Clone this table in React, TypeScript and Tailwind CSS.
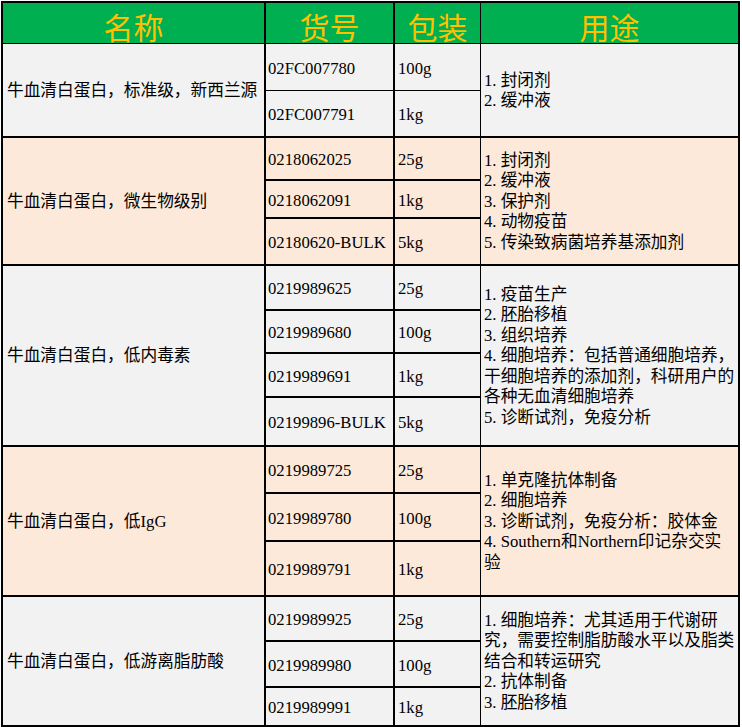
import React from "react";

type Group = {
  name: string;
  bg: string;
  h: string;
  rows: { code: string; pack: string; h: string; border: string }[];
  uses: string[];
};

const groups: Group[] = [
  {
    name: "牛血清白蛋白，标准级，新西兰源",
    bg: "bg-[#f2f2f2]",
    h: "h-[92px]",
    rows: [
      { code: "02FC007780", pack: "100g", h: "h-[46px]", border: "" },
      { code: "02FC007791", pack: "1kg", h: "h-[46px]", border: "border-t border-black" },
    ],
    uses: ["1.封闭剂", "2.缓冲液"],
  },
  {
    name: "牛血清白蛋白，微生物级别",
    bg: "bg-[#fde9d9]",
    h: "h-[128px] border-t-2 border-black",
    rows: [
      { code: "0218062025", pack: "25g", h: "h-[41px]", border: "" },
      { code: "0218062091", pack: "1kg", h: "h-[38px]", border: "border-t-2 border-black" },
      { code: "02180620-BULK", pack: "5kg", h: "h-[47px]", border: "border-t-2 border-black" },
    ],
    uses: ["1.封闭剂", "2.缓冲液", "3.保护剂", "4.动物疫苗", "5.传染致病菌培养基添加剂"],
  },
  {
    name: "牛血清白蛋白，低内毒素",
    bg: "bg-[#f2f2f2]",
    h: "h-[181px] border-t-2 border-black",
    rows: [
      { code: "0219989625", pack: "25g", h: "h-[43px]", border: "" },
      { code: "0219989680", pack: "100g", h: "h-[43px]", border: "border-t-2 border-black" },
      { code: "0219989691", pack: "1kg", h: "h-[44px]", border: "border-t-2 border-black" },
      { code: "02199896-BULK", pack: "5kg", h: "h-[49px]", border: "border-t-2 border-black" },
    ],
    uses: [
      "1.疫苗生产",
      "2.胚胎移植",
      "3.组织培养",
      "4.细胞培养：包括普通细胞培养，",
      "干细胞培养的添加剂，科研用户的",
      "各种无血清细胞培养",
      "5.诊断试剂，免疫分析",
    ],
  },
  {
    name: "牛血清白蛋白，低IgG",
    bg: "bg-[#fde9d9]",
    h: "h-[150px] border-t-2 border-black",
    rows: [
      { code: "0219989725", pack: "25g", h: "h-[45px]", border: "" },
      { code: "0219989780", pack: "100g", h: "h-[48px]", border: "border-t-2 border-black" },
      { code: "0219989791", pack: "1kg", h: "h-[55px]", border: "border-t-2 border-black" },
    ],
    uses: [
      "1.单克隆抗体制备",
      "2.细胞培养",
      "3.诊断试剂，免疫分析：胶体金",
      "4.Southern和Northern印记杂交实",
      "验",
    ],
  },
  {
    name: "牛血清白蛋白，低游离脂肪酸",
    bg: "bg-[#f2f2f2]",
    h: "h-[130px] border-t-2 border-black",
    rows: [
      { code: "0219989925", pack: "25g", h: "h-[43px]", border: "" },
      { code: "0219989980", pack: "100g", h: "h-[46px]", border: "border-t-2 border-black" },
      { code: "0219989991", pack: "1kg", h: "h-[39px]", border: "border-t-2 border-black" },
    ],
    uses: [
      "1.细胞培养：尤其适用于代谢研",
      "究，需要控制脂肪酸水平以及脂类",
      "结合和转运研究",
      "2.抗体制备",
      "3.胚胎移植",
    ],
  },
];

// "1." etc. is half-width in the original font, so give the prefix a fixed box
const UseLine = ({ text }: { text: string }) => {
  const m = text.match(/^(\d\.)(.*)$/);
  if (!m) return <div className="whitespace-nowrap">{text}</div>;
  return (
    <div className="whitespace-nowrap">
      <span className="inline-block w-[16.7px]">{m[1]}</span>
      {m[2]}
    </div>
  );
};

export default function App() {
  return (
    <div className="min-h-screen bg-white font-['Liberation_Serif','Noto_Sans_CJK_SC',serif] text-[16.7px] leading-[20.5px] text-black">
      <div className="ml-px mt-px w-[739px] border-2 border-black">
        {/* Header */}
        <div className="flex h-[41px] border-b border-black bg-[#00b050] font-['Noto_Sans_CJK_SC',sans-serif] text-[30px] leading-[30px] font-normal text-[#ffc000]">
          <div className="flex w-[263px] justify-center border-r-2 border-black pt-[8px]">名称</div>
          <div className="flex w-[129px] justify-center border-r-2 border-black pt-[8px]">货号</div>
          <div className="flex w-[86px] justify-center border-r border-black pt-[8px]">包装</div>
          <div className="flex flex-1 justify-center pt-[8px]">用途</div>
        </div>

        {groups.map((g) => (
          <div key={g.name} className={`flex ${g.h} ${g.bg}`}>
            <div className="flex w-[263px] items-center border-r-2 border-black pl-[4px] pt-[2px] whitespace-nowrap">
              {g.name}
            </div>
            <div className="flex w-[215px] flex-col">
              {g.rows.map((r) => (
                <div key={r.code} className={`flex ${r.h} ${r.border}`}>
                  <div className="flex w-[129px] items-center border-r-2 border-black pl-[2px] pt-[4px]">
                    {r.code}
                  </div>
                  <div className="flex w-[86px] items-center border-r border-black pl-[3px] pt-[4px]">
                    {r.pack}
                  </div>
                </div>
              ))}
            </div>
            <div className="flex flex-1 flex-col justify-center pl-[3px] pt-[2px]">
              {g.uses.map((u) => (
                <UseLine key={u} text={u} />
              ))}
            </div>
          </div>
        ))}
      </div>
    </div>
  );
}
